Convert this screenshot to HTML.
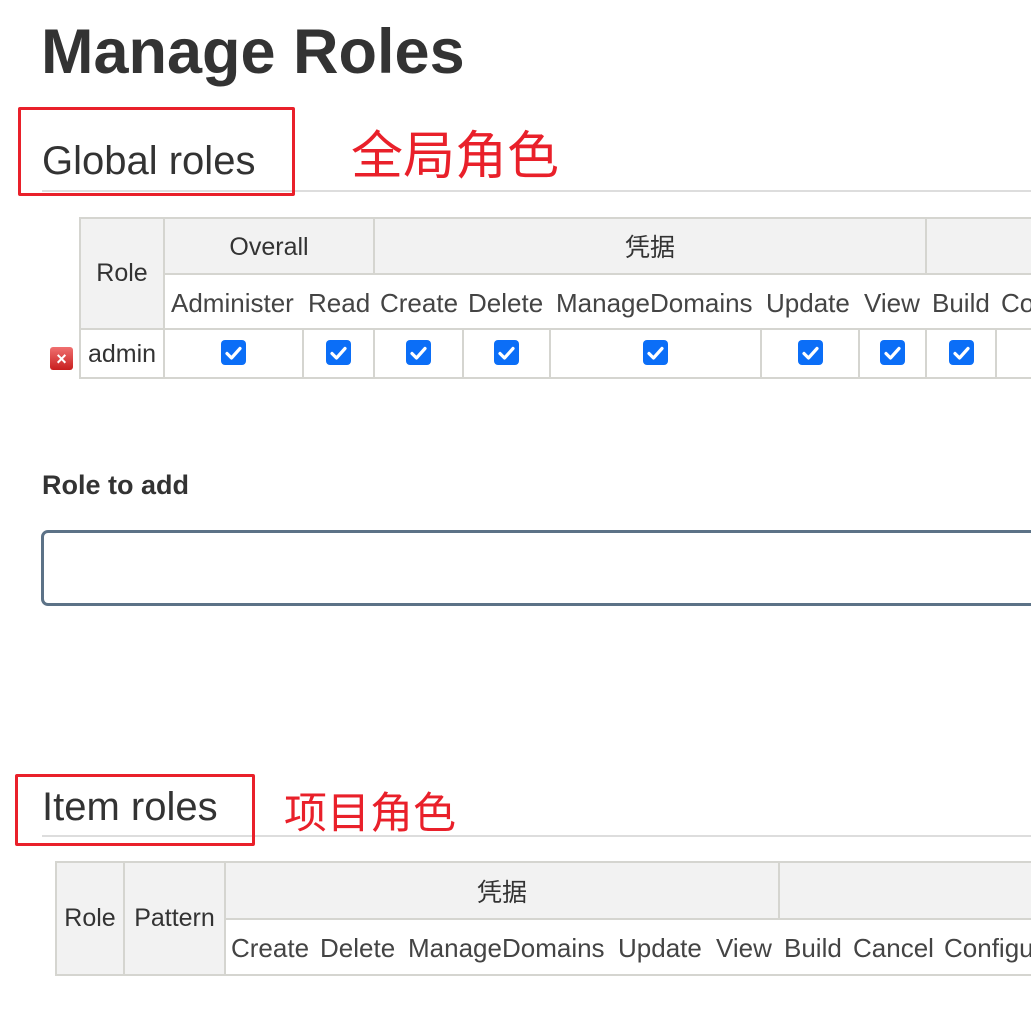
<!DOCTYPE html>
<html><head><meta charset="utf-8"><style>
*{margin:0;padding:0;box-sizing:border-box}
body{width:1031px;height:1012px;overflow:hidden;background:#fff;position:relative;font-family:"Liberation Sans","Noto Sans CJK SC",sans-serif;color:#333}
.a{position:absolute}
.c{position:absolute;display:flex;align-items:center;justify-content:center;font-size:25px;color:#333;white-space:nowrap}
.h{background:#f2f2f2}
.bd{border:2px solid #d5d5d0}
.sub{font-size:26px;color:#444;white-space:nowrap;position:absolute}
.cb{width:25px;height:25px;background:#0b6ef7;border-radius:4px;display:flex;align-items:center;justify-content:center}
.red{border:3px solid #e9202a;border-radius:2px}
.zh{color:#e9202a;font-family:"Noto Sans CJK SC",sans-serif}
</style></head><body>
<div class="a" style="left:41px;top:16px;font-size:63px;font-weight:bold;color:#333">Manage Roles</div>

<div class="a" style="left:42px;top:190px;width:989px;height:2px;background:#ddd"></div>
<div class="a" style="left:42px;top:139px;font-size:40px;color:#333">Global roles</div>
<div class="a red" style="left:18px;top:107px;width:277px;height:89px"></div>
<div class="a zh" style="left:351px;top:116px;font-size:52px;line-height:72px">全局角色</div>

<div class="c h bd" style="left:79px;top:217px;width:86px;height:113px">Role</div>
<div class="c h bd" style="left:163px;top:217px;width:212px;height:58px;padding-top:2px">Overall</div>
<div class="c h bd" style="left:373px;top:217px;width:554px;height:58px;font-family:'Noto Sans CJK SC',sans-serif">凭据</div>
<div class="c h bd" style="left:925px;top:217px;width:120px;height:58px"></div>
<div class="a" style="left:163px;top:273px;width:870px;height:57px;border-bottom:2px solid #d5d5d0;border-left:2px solid #d5d5d0"></div>
<div class="sub" style="left:171px;top:288px">Administer</div>
<div class="sub" style="left:308px;top:288px">Read</div>
<div class="sub" style="left:380px;top:288px">Create</div>
<div class="sub" style="left:468px;top:288px">Delete</div>
<div class="sub" style="left:556px;top:288px">ManageDomains</div>
<div class="sub" style="left:766px;top:288px">Update</div>
<div class="sub" style="left:864px;top:288px">View</div>
<div class="sub" style="left:932px;top:288px">Build</div>
<div class="sub" style="left:1001px;top:288px">Co</div>

<div class="c bd" style="left:79px;top:328px;width:86px;height:51px;border-top:none;padding-top:4px">admin</div>
<div class="a" style="left:50px;top:347px;width:23px;height:23px;border-radius:3px;background:linear-gradient(#f07070,#c81e1e);color:#fff;font-size:18px;font-weight:bold;display:flex;align-items:center;justify-content:center;line-height:1">×</div>

<div id="cells"></div>
<script>
var xs=[163,302,373,462,549,760,858,925,995,1100];
var h='';
for(var i=0;i<xs.length-1;i++){
 var w=xs[i+1]-xs[i]+2;
 h+='<div class="c bd" style="left:'+xs[i]+'px;top:328px;width:'+w+'px;height:51px;border-top:none">'+(i<8?'<div class="cb"><svg width="17" height="14" viewBox="0 0 17 14"><path d="M2 7.5l4.5 4.5L15 2.5" stroke="#fff" stroke-width="3.2" fill="none" stroke-linecap="round" stroke-linejoin="round"/></svg></div>':'')+'</div>';
}
document.getElementById('cells').innerHTML=h;
</script>

<div class="a" style="left:42px;top:470px;font-size:27px;font-weight:bold;color:#333">Role to add</div>
<div class="a" style="left:41px;top:530px;width:1010px;height:76px;border:3px solid #5c7287;border-radius:7px"></div>

<div class="a" style="left:42px;top:835px;width:989px;height:2px;background:#ddd"></div>
<div class="a" style="left:42px;top:785px;font-size:40px;color:#333">Item roles</div>
<div class="a red" style="left:15px;top:774px;width:240px;height:72px"></div>
<div class="a zh" style="left:284px;top:779px;font-size:43px;line-height:62px">项目角色</div>

<div class="c h bd" style="left:55px;top:861px;width:70px;height:115px">Role</div>
<div class="c h bd" style="left:123px;top:861px;width:103px;height:115px">Pattern</div>
<div class="c h bd" style="left:224px;top:861px;width:556px;height:59px;font-family:'Noto Sans CJK SC',sans-serif">凭据</div>
<div class="c h bd" style="left:778px;top:861px;width:270px;height:59px"></div>
<div class="a" style="left:224px;top:918px;width:820px;height:58px;border-bottom:2px solid #d5d5d0"></div>
<div class="sub" style="left:231px;top:933px">Create</div>
<div class="sub" style="left:320px;top:933px">Delete</div>
<div class="sub" style="left:408px;top:933px">ManageDomains</div>
<div class="sub" style="left:618px;top:933px">Update</div>
<div class="sub" style="left:716px;top:933px">View</div>
<div class="sub" style="left:784px;top:933px">Build</div>
<div class="sub" style="left:853px;top:933px">Cancel</div>
<div class="sub" style="left:944px;top:933px">Configure</div>
</body></html>
